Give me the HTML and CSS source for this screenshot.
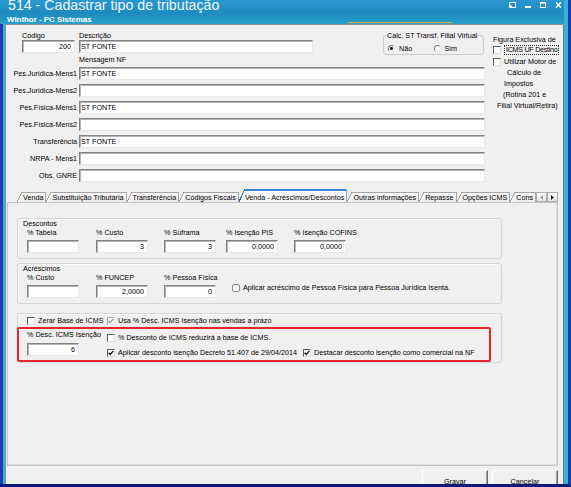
FILE: index.html
```html
<!DOCTYPE html>
<html lang="pt-BR">
<head>
    <meta charset="UTF-8">
    <meta name="viewport" content="width=device-width, initial-scale=1.0">
    <title>514 - Cadastrar tipo de tributação</title>
    <link rel="stylesheet" href="styles.css">
</head>
<body>
<div class="window">
    <div class="main">
        <div class="titlebar">
            <div class="title-text">
                <div class="title">514 - Cadastrar tipo de tributação</div>
                <div class="subtitle">Winthor - PC Sistemas</div>
            </div>
            <div class="controls">
                <svg width="7" height="6" viewBox="0 0 7 6"><rect x="0.5" y="0.5" width="6" height="5" fill="none" stroke="#fff"/><path d="M0 6V1.5L4.5 6z" fill="#fff"/></svg>
                <svg width="6" height="6" viewBox="0 0 6 6"><rect x="0" y="4" width="6" height="2" fill="#fff"/></svg>
                <svg width="6" height="6" viewBox="0 0 6 6"><rect x="0.5" y="0.5" width="5" height="5" fill="none" stroke="#fff"/><rect x="0" y="0" width="6" height="1.6" fill="#fff"/></svg>
                <svg width="7" height="6" viewBox="0 0 7 6"><path d="M1 0.3l5 5.4M6 0.3L1 5.7" stroke="#fff" stroke-width="1.4"/></svg>
            </div>
        </div>

        <div class="frame">
            <div class="client">
                <div class="head">
                    <div class="head-main">
                        <div class="row-top">
                            <div class="field codigo">
                                <label class="lbl">Código</label>
                                <input class="input num" type="text" value="200">
                            </div>
                            <div class="field descricao">
                                <label class="lbl">Descrição</label>
                                <input class="input" type="text" value="ST FONTE">
                            </div>
                            <fieldset class="calc">
                                <legend>Calc. ST Transf. Filial Virtual</legend>
                                <div class="radios">
                                    <span class="opt"><span class="radio on"></span>Não</span>
                                    <span class="opt"><span class="radio"></span>Sim</span>
                                </div>
                            </fieldset>
                        </div>

                        <div class="msg-title">Mensagem NF</div>
                        <div class="msg-grid">
                            <span class="msg-label">Pes.Jurídica-Mens1</span><input class="input" type="text" value="ST FONTE">
                            <span class="msg-label">Pes.Jurídica-Mens2</span><input class="input" type="text" value="">
                            <span class="msg-label">Pes.Física-Mens1</span><input class="input" type="text" value="ST FONTE">
                            <span class="msg-label">Pes.Física-Mens2</span><input class="input" type="text" value="">
                            <span class="msg-label">Transferência</span><input class="input" type="text" value="ST FONTE">
                            <span class="msg-label">NRPA - Mens1</span><input class="input" type="text" value="">
                            <span class="msg-label">Obs. GNRE</span><input class="input" type="text" value="">
                        </div>
                    </div>

                    <div class="head-side">
                        <div class="side-title">Figura Exclusiva de</div>
                        <div class="check destino"><span class="cb"></span><span class="focus">ICMS UF Destino</span></div>
                        <div class="motor">
                            <div class="check"><span class="cb"></span>Utilizar Motor de</div>
                            <div class="ind-14">Cálculo de</div>
                            <div class="ind-11">Impostos</div>
                            <div class="ind-10">(Rotina 201 e</div>
                            <div class="ind-4">Filial Virtual/Retira)</div>
                        </div>
                    </div>
                </div>

                <div class="tabs">
                    <div class="tab-list">
                        <span class="tab">Venda</span>
                        <span class="tab">Substituição Tributária</span>
                        <span class="tab">Transferência</span>
                        <span class="tab">Códigos Fiscais</span>
                        <span class="tab active">Venda - Acréscimos/Descontos</span>
                        <span class="tab">Outras informações</span>
                        <span class="tab">Repasse</span>
                        <span class="tab">Opções ICMS</span>
                        <span class="tab">Cons</span>
                    </div>
                    <div class="tab-arrows">
                        <span class="arrow"><svg width="3" height="5" viewBox="0 0 3 5"><path d="M3 0v5L0 2.5z" fill="#9a9a9a"/></svg></span>
                        <span class="arrow"><svg width="3" height="5" viewBox="0 0 3 5"><path d="M0 0v5l3-2.5z" fill="#111"/></svg></span>
                    </div>
                </div>

                <div class="panel">
                    <div class="box">
                        <div class="box-title">Descontos</div>
                        <div class="grid descontos">
                            <span>% Tabela</span>
                            <span>% Custo</span>
                            <span>% Suframa</span>
                            <span>% Isenção PIS</span>
                            <span>% Isenção COFINS</span>
                            <input class="input num" type="text" value="">
                            <input class="input num" type="text" value="3">
                            <input class="input num" type="text" value="3">
                            <input class="input num" type="text" value="0,0000">
                            <input class="input num" type="text" value="0,0000">
                        </div>
                    </div>

                    <div class="box">
                        <div class="box-title">Acréscimos</div>
                        <div class="grid acrescimos">
                            <span>% Custo</span>
                            <span>% FUNCEP</span>
                            <span>% Pessoa Física</span>
                            <span></span>
                            <input class="input num" type="text" value="">
                            <input class="input num" type="text" value="2,0000">
                            <input class="input num" type="text" value="0">
                            <div class="check"><span class="cb modern"></span>Aplicar acréscimo de Pessoa Física para Pessoa Jurídica Isenta.</div>
                        </div>
                    </div>

                    <div class="box icms">
                        <div class="icms-top">
                            <div class="check zerar"><span class="cb"></span>Zerar Base de ICMS</div>
                            <div class="check"><span class="cb disabled"><svg width="6" height="6" viewBox="0 0 6 6"><path d="M0.6 2.8l1.6 1.7L5.4 0.9" fill="none" stroke="#9c9c9c" stroke-width="1.3"/></svg></span>Usa % Desc. ICMS Isenção nas vendas a prazo</div>
                        </div>
                        <div class="highlight">
                            <div class="isencao">
                                <span>% Desc. ICMS Isenção</span>
                                <input class="input num" type="text" value="6">
                            </div>
                            <div class="isencao-opts">
                                <div class="check"><span class="cb"></span>% Desconto de ICMS reduzirá a base de ICMS.</div>
                                <div class="opts-row">
                                    <div class="check"><span class="cb"><svg width="6" height="6" viewBox="0 0 6 6"><path d="M0.6 2.8l1.6 1.7L5.4 0.9" fill="none" stroke="#111" stroke-width="1.3"/></svg></span>Aplicar desconto isenção Decreto 51.407 de 29/04/2014</div>
                                    <div class="check"><span class="cb"><svg width="6" height="6" viewBox="0 0 6 6"><path d="M0.6 2.8l1.6 1.7L5.4 0.9" fill="none" stroke="#111" stroke-width="1.3"/></svg></span>Destacar desconto isenção como comercial na NF</div>
                                </div>
                            </div>
                        </div>
                    </div>
                </div>

                <div class="buttons">
                    <button class="btn" type="button"><u>G</u>ravar</button>
                    <button class="btn" type="button"><u>C</u>ancelar</button>
                </div>
            </div>
        </div>
    </div>
</div>
</body>
</html>
```

FILE: styles.css
```css
body {
    margin: 0;
    background: #1b3db0;
    font-family: "Liberation Sans", Arial, sans-serif;
    font-size: 7.2px;
    line-height: 9px;
    color: #000;
}

/* window frame */
.window {
    width: 571px;
    height: 487px;
    box-sizing: border-box;
    display: flex;
    border-right: 3px solid #1b3db0;
    border-bottom: 3px solid #0d1b78;
    overflow: hidden;
}
.main {
    flex: 1;
    min-width: 0;
    display: flex;
    flex-direction: column;
    border-right: 4px solid #38b2d6;
}
.titlebar {
    height: 24px;
    flex-shrink: 0;
    display: flex;
    padding: 0 2px 0 8px;
    overflow: hidden;
    color: #fff;
    background:
        linear-gradient(#e0a13a, #e0a13a) 348px 22px / 104px 1px no-repeat,
        linear-gradient(#2b97d0, #1d8bbf 55%, #2aa1c9);
}
.title {
    font-size: 14.2px;
    line-height: 14px;
    margin-top: -2px;
    color: #eef7fb;
    white-space: nowrap;
}
.subtitle {
    font-weight: bold;
    font-size: 7.9px;
    line-height: 9px;
    margin: 3px 0 0 -1px;
    white-space: nowrap;
}
.controls {
    margin-left: auto;
    display: flex;
    align-items: flex-start;
    gap: 9px;
    padding-top: 2px;
}
.controls svg {
    display: block;
}
.frame {
    flex: 1;
    min-height: 0;
    display: flex;
    border-left: 3px solid #1b3db0;
}
.client {
    flex: 1;
    min-width: 0;
    display: flex;
    flex-direction: column;
    border-left: 2px solid #38b2d6;
    background: #f0f0f0;
    box-shadow: inset 1px 1px 0 #8d8d8d, inset -1px 0 0 #767676;
    padding: 0 1px;
    overflow: hidden;
}

/* header fields */
.head {
    display: flex;
    gap: 7px;
    padding-top: 7px;
    flex-shrink: 0;
}
.head-main {
    width: 480px;
}
.row-top {
    display: flex;
    align-items: flex-start;
}
.field {
    display: flex;
    flex-direction: column;
}
.field.codigo {
    width: 53px;
    margin-left: 16px;
}
.field.descricao {
    width: 234px;
    margin-left: 4px;
}
.calc {
    margin: 0 0 -2px 70px;
    width: 101px;
    min-width: 0;
    box-sizing: border-box;
    padding: 4px 4px 1px;
    border: 1px solid #cdcdcd;
    border-radius: 3px;
}
.calc legend {
    padding: 0 1px;
    margin-left: -2px;
    line-height: 9px;
    white-space: nowrap;
}
.radios {
    display: flex;
}
.opt {
    display: flex;
    align-items: center;
    gap: 4px;
    width: 54px;
}
.radio {
    width: 7px;
    height: 7px;
    box-sizing: border-box;
    border-radius: 50%;
    border: 1px solid;
    border-color: #7a7a7a #e6e6e6 #e6e6e6 #7a7a7a;
    background: #fff;
}
.radio.on {
    background: radial-gradient(circle, #222 0 1.3px, #fff 1.7px);
}

.msg-title {
    margin: 2px 0 0 73px;
}
.msg-grid {
    display: grid;
    grid-template-columns: 71px 406px;
    grid-auto-rows: 13px;
    column-gap: 2px;
    row-gap: 4px;
    margin-top: 3px;
}
.msg-label {
    text-align: right;
    line-height: 13px;
    white-space: nowrap;
}

.input {
    display: block;
    width: 100%;
    height: 13px;
    box-sizing: border-box;
    margin: 0;
    padding: 0 1px;
    border: 1px solid;
    border-color: #828282 #e9e9e9 #e9e9e9 #828282;
    box-shadow: inset 1px 1px 0 #b4b4b4;
    background: #fff;
    font: inherit;
    color: #000;
    outline: none;
}
.num {
    text-align: right;
    padding-right: 3px;
}

.head-side {
    width: 68px;
    margin-top: 4px;
}
.side-title {
    white-space: nowrap;
}
.check {
    display: flex;
    align-items: center;
    gap: 3px;
    white-space: nowrap;
}
.destino {
    height: 10px;
    margin-top: 1px;
}
.focus {
    border: 1px dotted #333;
    padding: 0 1px;
    line-height: 8px;
    letter-spacing: -0.3px;
}
.motor {
    margin-top: 1px;
    line-height: 11px;
    white-space: nowrap;
}
.ind-14 { padding-left: 14px; }
.ind-11 { padding-left: 11px; }
.ind-10 { padding-left: 10px; }
.ind-4 { padding-left: 4px; }

.cb {
    width: 8px;
    height: 8px;
    flex-shrink: 0;
    box-sizing: border-box;
    border: 1px solid;
    border-color: #5c5c5c #dcdcdc #dcdcdc #5c5c5c;
    background: #fff;
    display: flex;
    align-items: center;
    justify-content: center;
}
.cb svg {
    display: block;
}
.cb.modern {
    border: 1px solid #8f8f8f;
    border-radius: 2px;
    background: linear-gradient(#e9e9e9, #fff);
}
.cb.disabled {
    border-color: #a8a8a8 #e4e4e4 #e4e4e4 #a8a8a8;
    background: #f6f6f6;
}

/* tabs */
.tabs {
    display: flex;
    align-items: flex-end;
    height: 13px;
    margin: 7px 5px 0 1px;
    padding-left: 10px;
    flex-shrink: 0;
}
.tab-list {
    display: flex;
    align-items: flex-end;
    flex: 1;
    min-width: 0;
    height: 13px;
    overflow: hidden;
}
.tab {
    flex-shrink: 0;
    box-sizing: border-box;
    height: 10px;
    padding: 1px 2px 0 6px;
    line-height: 9px;
    white-space: nowrap;
    border-right: 1px solid #a6a6a6;
    background:
        linear-gradient(#a6a6a6, #a6a6a6) 5px 0 / 100% 1px no-repeat,
        linear-gradient(to bottom right, transparent calc(50% - 0.6px), #a6a6a6 calc(50% - 0.6px), #a6a6a6 calc(50% + 0.4px), #f3f3f3 calc(50% + 0.4px)) 0 0 / 5px 100% no-repeat,
        linear-gradient(#fbfbfb, #ebebeb) 5px 0 / 100% 100% no-repeat;
}
.tab.active {
    height: 13px;
    padding-top: 4px;
    border-right-color: #9aa6b4;
    background:
        linear-gradient(#3a86d4, #3a86d4) 6px 0 / 100% 2px no-repeat,
        linear-gradient(to bottom right, transparent calc(50% - 0.6px), #2f6fb8 calc(50% - 0.6px), #2f6fb8 calc(50% + 0.4px), #f8f8f8 calc(50% + 0.4px)) 0 0 / 6px 100% no-repeat,
        linear-gradient(#f8f8f8, #f8f8f8) 6px 0 / 100% 100% no-repeat;
}
.tab-arrows {
    display: flex;
}
.arrow {
    width: 11px;
    height: 10px;
    box-sizing: border-box;
    border: 1px solid #acacac;
    background: linear-gradient(#fafafa, #e6e6e6);
    display: flex;
    align-items: center;
    justify-content: center;
}
.arrow svg {
    display: block;
}

/* tab page */
.panel {
    height: 264px;
    flex-shrink: 0;
    box-sizing: border-box;
    margin: 0 5px 0 1px;
    border: 1px solid #c4c4c4;
    box-shadow: inset -1px -1px 0 #dcdcdc;
    padding: 15px 0 0 9px;
}
.box {
    width: 485px;
    box-sizing: border-box;
    border: 1px solid #d6d6d6;
    border-radius: 3px;
    box-shadow: inset 1px 1px 0 #fafafa;
    padding: 0 0 5px 9px;
}
.box + .box {
    margin-top: 4px;
}
.box-title {
    margin-left: -4px;
}
.grid {
    display: grid;
    grid-template-rows: 9px 13px;
    row-gap: 3px;
}
.grid span {
    white-space: nowrap;
}
.grid .input {
    width: 52px;
}
.grid.descontos {
    grid-template-columns: 69px 68px 62px 68px 52px;
}
.grid.acrescimos {
    grid-template-columns: 69px 68px 68px auto;
}
.grid .check {
    align-self: start;
    margin-top: -2px;
    height: 9px;
}

.box.icms {
    margin-top: 9px;
    padding: 2px 0 0 9px;
}
.icms-top {
    display: flex;
}
.icms-top .zerar {
    width: 80px;
}
.highlight {
    display: flex;
    width: 474px;
    height: 35px;
    box-sizing: border-box;
    margin: 2px 0 0 -10px;
    padding: 1px 0 0 8px;
    border: 2px solid #e5262e;
    border-radius: 2px;
}
.isencao {
    width: 80px;
    white-space: nowrap;
}
.isencao .input {
    width: 52px;
    margin-top: 4px;
}
.isencao-opts {
    padding-top: 3px;
}
.opts-row {
    display: flex;
    gap: 6px;
    margin-top: 6px;
}

/* bottom buttons */
.buttons {
    display: flex;
    justify-content: flex-end;
    gap: 4px;
    margin-top: 4px;
    padding-right: 5px;
    flex-shrink: 0;
}
.btn {
    width: 66px;
    height: 20px;
    box-sizing: border-box;
    margin: 0;
    padding: 3px 0 0;
    border: 1px solid;
    border-color: #fdfdfd #6d6d6d #6d6d6d #fdfdfd;
    box-shadow: inset -1px 0 0 #a0a0a0;
    background: #efefef;
    font: inherit;
    line-height: 9px;
    color: #000;
    text-align: center;
    vertical-align: top;
}
```
